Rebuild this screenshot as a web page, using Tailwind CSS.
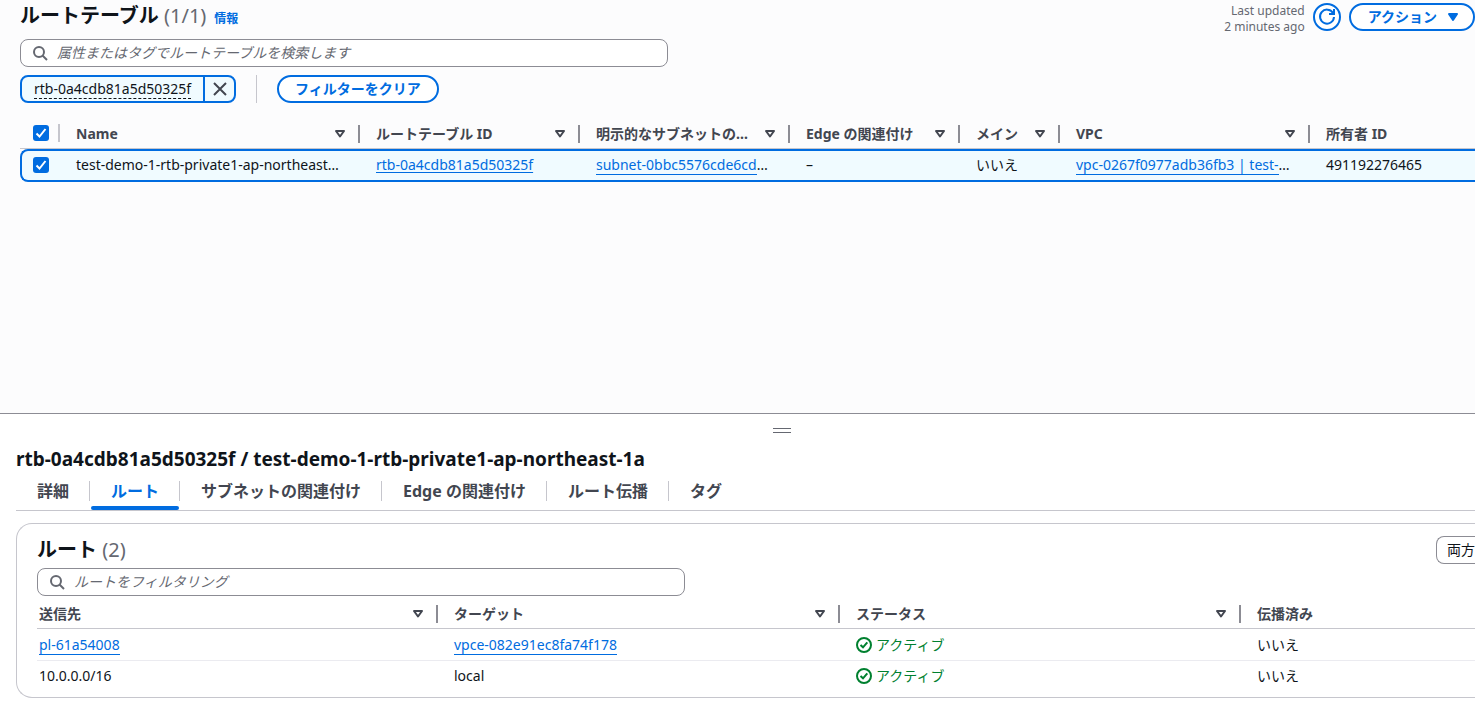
<!DOCTYPE html>
<html lang="ja">
<head>
<meta charset="utf-8">
<meta name="viewport" content="width=device-width, initial-scale=1">
<title>ルートテーブル</title>
<script src="https://cdn.jsdelivr.net/npm/@tailwindcss/browser@4"></script>
</head>
<body class="flex min-h-screen flex-col overflow-x-hidden bg-[#fcfcfd] font-['Noto_Sans','Noto_Sans_CJK_JP',sans-serif] text-sm leading-5 text-[#0f141a]">
<svg class="hidden">
  <symbol id="sort" viewBox="0 0 16 16"><path d="M4 5h8l-4 5.500z" fill="none" stroke="currentColor" stroke-width="2" stroke-linejoin="round"/></symbol>
  <symbol id="search" viewBox="0 0 16 16"><circle cx="7" cy="7" r="5" fill="none" stroke="currentColor" stroke-width="2"/><path d="m10.500 10.500 4.500 4.500" stroke="currentColor" stroke-width="2"/></symbol>
  <symbol id="check" viewBox="0 0 16 16"><circle cx="8" cy="8" r="7" fill="none" stroke="currentColor" stroke-width="2"/><path d="m4.500 8 2.500 2.300 4.300-5" fill="none" stroke="currentColor" stroke-width="2"/></symbol>
  <symbol id="tick" viewBox="0 0 16 16"><path d="m3.500 8.500 3 3 6-7.500" fill="none" stroke="#fff" stroke-width="2"/></symbol>
</svg>

<main class="flex-1">
  <header class="flex items-start justify-between pl-5 pt-[3px]">
    <div class="flex items-baseline gap-2">
      <h1 class="text-xl leading-[26px] font-semibold">ルートテーブル <span class="font-normal text-[#656871]">(1/1)</span></h1>
      <a href="#" class="text-xs leading-4 font-bold text-[#006ce0]">情報</a>
    </div>
    <div class="flex gap-2">
      <p class="text-right text-xs leading-4 text-[#656871]">Last updated<br>2 minutes ago</p>
      <button aria-label="更新" class="flex size-7 items-center justify-center rounded-full border-2 border-[#006ce0] bg-white text-[#006ce0]">
        <svg viewBox="0 0 16 16" class="size-4 overflow-visible" fill="none" stroke="currentColor" stroke-width="2"><path d="M10 5h5V0"/><path d="M15 8a7 7 0 1 1-1-4"/></svg>
      </button>
      <button class="flex h-7 items-center gap-2 rounded-full border-2 border-[#006ce0] bg-white pr-3 pl-[17px] font-bold text-[#006ce0]">アクション
        <svg viewBox="0 0 16 16" class="size-4"><path d="M4 5h8l-4 6z" fill="currentColor" stroke="currentColor" stroke-width="2" stroke-linejoin="round"/></svg>
      </button>
    </div>
  </header>

  <div class="mt-1 ml-5">
    <label class="flex h-7 w-full max-w-[648px] items-center gap-2 rounded-lg border border-[#8c8c94] bg-white px-[11px] text-[#656871]">
      <svg class="size-4"><use href="#search"/></svg>
      <input type="text" aria-label="検索" placeholder="属性またはタグでルートテーブルを検索します" class="min-w-0 flex-1 pl-px outline-none placeholder:text-[#656871] placeholder:italic">
    </label>
    <div class="mt-2 flex items-center gap-5">
      <div class="flex h-7 overflow-hidden rounded-lg border-2 border-[#006ce0] bg-[#f0fbff]">
        <button class="flex items-center px-3"><span class="border-b border-dashed border-[#0f141a] leading-[18px]">rtb-0a4cdb81a5d50325f</span></button>
        <button aria-label="フィルターを削除" class="flex w-[31px] items-center justify-center border-l-2 border-[#006ce0] text-[#424650]"><svg viewBox="0 0 16 16" class="size-4" stroke="currentColor" stroke-width="2"><path d="m2 2 12 12M14 2 2 14"/></svg></button>
      </div>
      <span class="h-7 w-px bg-[#c6c6cd]"></span>
      <button class="h-7 rounded-full border-2 border-[#006ce0] bg-white px-4 font-bold leading-6 text-[#006ce0]">フィルターをクリア</button>
    </div>

    <table class="mt-[15px] w-full table-fixed border-separate border-spacing-0 whitespace-nowrap">
      <colgroup><col class="w-10"><col class="w-[300px]"><col class="w-[220px]"><col class="w-[210px]"><col class="w-[170px]"><col class="w-[100px]"><col class="w-[250px]"><col></colgroup>
      <thead class="text-left text-[#424650]">
        <tr class="[&>th]:border-b [&>th]:border-[#c6c6cd] [&>th]:p-0 [&>th+th]:pt-px">
          <th class="h-[31px]"><div class="flex items-center justify-between pl-[13px]"><span class="relative flex size-4"><input type="checkbox" checked aria-label="すべて選択" class="size-4 appearance-none rounded-[3px] bg-[#006ce0]"><svg class="pointer-events-none absolute inset-0 size-4"><use href="#tick"/></svg></span><span class="h-[18px] w-0.5 bg-[#c6c6cd]"></span></div></th>
          <th><div class="flex items-center gap-[10px] pl-4"><span class="flex-1">Name</span><svg class="size-4 shrink-0"><use href="#sort"/></svg><span class="h-[18px] w-0.5 bg-[#8c8c94]"></span></div></th>
          <th><div class="flex items-center gap-[10px] pl-4"><span class="flex-1">ルートテーブル ID</span><svg class="size-4 shrink-0"><use href="#sort"/></svg><span class="h-[18px] w-0.5 bg-[#8c8c94]"></span></div></th>
          <th><div class="flex items-center gap-[10px] pl-4"><span class="flex-1">明示的なサブネットの…</span><svg class="size-4 shrink-0"><use href="#sort"/></svg><span class="h-[18px] w-0.5 bg-[#8c8c94]"></span></div></th>
          <th><div class="flex items-center gap-[10px] pl-4"><span class="flex-1">Edge の関連付け</span><svg class="size-4 shrink-0"><use href="#sort"/></svg><span class="h-[18px] w-0.5 bg-[#8c8c94]"></span></div></th>
          <th><div class="flex items-center gap-[10px] pl-4"><span class="flex-1">メイン</span><svg class="size-4 shrink-0"><use href="#sort"/></svg><span class="h-[18px] w-0.5 bg-[#8c8c94]"></span></div></th>
          <th><div class="flex items-center gap-[10px] pl-4"><span class="flex-1">VPC</span><svg class="size-4 shrink-0"><use href="#sort"/></svg><span class="h-[18px] w-0.5 bg-[#8c8c94]"></span></div></th>
          <th><div class="pl-4">所有者 ID</div></th>
        </tr>
      </thead>
      <tbody>
        <tr class="[&>td]:border-y-2 [&>td]:border-[#006ce0] [&>td]:bg-[#f0fbff] [&>td]:p-0 [&>td]:pb-px">
          <td class="h-[33px] rounded-l-lg border-l-2"><span class="relative ml-[11px] flex size-4"><input type="checkbox" checked aria-label="行を選択" class="size-4 appearance-none rounded-[3px] bg-[#006ce0]"><svg class="pointer-events-none absolute inset-0 size-4"><use href="#tick"/></svg></span></td>
          <td><div class="pl-4">test-demo-1-rtb-private1-ap-northeast…</div></td>
          <td><div class="pl-4"><a href="#" class="text-[#006ce0] underline underline-offset-2">rtb-0a4cdb81a5d50325f</a></div></td>
          <td><div class="pl-4"><a href="#" class="border-b border-[#006ce0] text-[#006ce0]">subnet-0bbc5576cde6cd</a>…</div></td>
          <td><div class="pl-4">–</div></td>
          <td><div class="pl-4">いいえ</div></td>
          <td><div class="pl-4"><a href="#" class="border-b border-[#006ce0] text-[#006ce0]">vpc-0267f0977adb36fb3 | test-</a>…</div></td>
          <td><div class="pl-4">491192276465</div></td>
        </tr>
      </tbody>
    </table>
  </div>
</main>

<section class="border-t border-[#8c8c94] bg-white pb-[3px]">
  <div class="flex justify-center pt-[14px] pl-[89px]">
    <button aria-label="サイズ変更" class="h-[5px] w-[18px] border-y border-[#656871]"></button>
  </div>
  <div class="pl-4">
  <h2 class="mt-[14px] text-[19px] leading-6 font-bold">rtb-0a4cdb81a5d50325f / test-demo-1-rtb-private1-ap-northeast-1a</h2>
  <nav class="flex h-10 items-center border-b border-[#c6c6cd] text-base leading-5 font-bold text-[#424650]" role="tablist">
    <button role="tab" class="h-5 border-r border-[#c6c6cd] pr-5 pl-[21px]">詳細</button>
    <button role="tab" aria-selected="true" class="relative h-5 border-r border-[#c6c6cd] pr-5 pl-[21px] text-[#006ce0]">ルート<span class="absolute -bottom-[9px] left-px right-0 h-1 rounded-xs bg-[#006ce0]"></span></button>
    <button role="tab" class="h-5 border-r border-[#c6c6cd] pr-5 pl-[21px]">サブネットの関連付け</button>
    <button role="tab" class="h-5 border-r border-[#c6c6cd] px-5 pl-[21px]">Edge の関連付け</button>
    <button role="tab" class="h-5 border-r border-[#c6c6cd] pr-5 pl-[21px]">ルート伝播</button>
    <button role="tab" class="h-5 pr-5 pl-[21px]">タグ</button>
  </nav>
  <div class="mt-3 rounded-l-2xl border border-r-0 border-[#c6c6cd] pb-[5px] pl-5">
    <div class="flex items-center justify-between pt-3">
      <h3 class="text-xl leading-7 font-semibold">ルート <span class="font-normal text-[#656871]">(2)</span></h3>
      <button class="h-7 rounded-l-lg border border-r-0 border-[#8c8c94] bg-white pl-[10px] leading-5">両方</button>
    </div>
    <label class="mt-1 flex h-7 w-full max-w-[648px] items-center gap-2 rounded-lg border border-[#8c8c94] bg-white px-[11px] text-[#656871]">
      <svg class="size-4"><use href="#search"/></svg>
      <input type="text" aria-label="ルートをフィルタリング" placeholder="ルートをフィルタリング" class="min-w-0 flex-1 pl-px outline-none placeholder:text-[#656871] placeholder:italic">
    </label>
    <table class="w-full table-fixed border-separate border-spacing-0 whitespace-nowrap">
      <colgroup><col class="w-[401px]"><col class="w-[402px]"><col class="w-[401px]"><col></colgroup>
      <thead class="text-left text-[#424650]">
        <tr class="[&>th]:border-b [&>th]:border-[#c6c6cd] [&>th]:p-0 [&>th]:pt-1">
          <th class="h-[33px]"><div class="flex items-center gap-[10px] pl-0.5"><span class="flex-1">送信先</span><svg class="size-4"><use href="#sort"/></svg><span class="h-[18px] w-0.5 bg-[#8c8c94]"></span></div></th>
          <th><div class="flex items-center gap-[10px] pl-4"><span class="flex-1">ターゲット</span><svg class="size-4"><use href="#sort"/></svg><span class="h-[18px] w-0.5 bg-[#8c8c94]"></span></div></th>
          <th><div class="flex items-center gap-[10px] pl-4"><span class="flex-1">ステータス</span><svg class="size-4"><use href="#sort"/></svg><span class="h-[18px] w-0.5 bg-[#8c8c94]"></span></div></th>
          <th><div class="pl-4">伝播済み</div></th>
        </tr>
      </thead>
      <tbody>
        <tr class="[&>td]:border-b [&>td]:border-[#ebebf0] [&>td]:p-0">
          <td class="h-8"><div class="pl-0.5"><a href="#" class="border-b border-[#006ce0] text-[#006ce0]">pl-61a54008</a></div></td>
          <td><div class="pl-4"><a href="#" class="border-b border-[#006ce0] text-[#006ce0]">vpce-082e91ec8fa74f178</a></div></td>
          <td><div class="flex items-center gap-1 pl-4 text-[#00802f]"><svg class="size-4"><use href="#check"/></svg>アクティブ</div></td>
          <td><div class="pl-4">いいえ</div></td>
        </tr>
        <tr class="[&>td]:p-0 [&>td]:pb-px">
          <td class="h-[31px]"><div class="pl-0.5">10.0.0.0/16</div></td>
          <td><div class="pl-4">local</div></td>
          <td><div class="flex items-center gap-1 pl-4 text-[#00802f]"><svg class="size-4"><use href="#check"/></svg>アクティブ</div></td>
          <td><div class="pl-4">いいえ</div></td>
        </tr>
      </tbody>
    </table>
  </div>
  </div>
</section>
</body>
</html>
